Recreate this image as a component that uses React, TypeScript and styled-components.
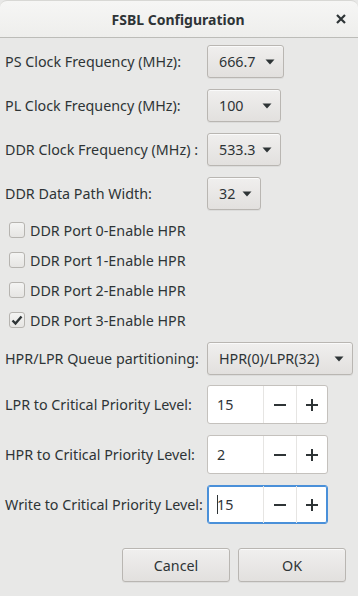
import React from "react";
import styled, { createGlobalStyle } from "styled-components";

const Global = createGlobalStyle`
  html, body { margin: 0; padding: 0; background: #e8e8e7; }
  body { font-family: "Noto Sans", "Open Sans", sans-serif; color: #2e3436; }
  * { box-sizing: border-box; }
`;

const Window = styled.div`
  width: 358px;
  height: 596px;
  background: #e8e8e7;
  display: flex;
  flex-direction: column;
  overflow: hidden;
`;

const TitleBar = styled.div`
  height: 38px;
  flex: none;
  display: flex;
  align-items: center;
  justify-content: center;
  position: relative;
  background: linear-gradient(#f6f6f5, #eeeeec);
  border-bottom: 1px solid #bcbcb8;
  border-radius: 7px 7px 0 0;
  border-top: 1px solid #d8d8d5;
`;

const Title = styled.div`
  font-size: 14px;
  font-weight: bold;
  color: #2e3436;
  margin-left: -2px;
`;

const Close = styled.div`
  position: absolute;
  right: 10px;
  top: 11px;
  width: 14px;
  height: 14px;
  display: flex;
  align-items: center;
  justify-content: center;
`;

const Body = styled.div`
  display: flex;
  flex-direction: column;
  padding: 7px 0 0 0;
`;

const Row = styled.div<{ $h: number; $mb: number; $mt?: number }>`
  display: grid;
  grid-template-columns: 207px auto;
  align-items: center;
  height: ${(p) => p.$h}px;
  margin-top: ${(p) => p.$mt ?? 0}px;
  margin-bottom: ${(p) => p.$mb}px;
`;

const Label = styled.div`
  padding-left: 5px;
  font-size: 14.3px;
  white-space: nowrap;
`;

const Combo = styled.div<{ $w: number }>`
  width: ${(p) => p.$w}px;
  height: 33px;
  border: 1px solid #b9b6b2;
  border-radius: 3px;
  background: linear-gradient(#f0efee, #e2e0de);
  box-shadow: inset 0 1px #fafafa, 0 1px rgba(0, 0, 0, 0.05);
  display: flex;
  align-items: center;
  padding-left: 11px;
  padding-right: 8px;
  font-size: 14.3px;
  gap: 6px;
`;

const ComboText = styled.span`
  flex: 1;
  white-space: nowrap;
`;

const Arrow = () => (
  <svg width="10" height="6" viewBox="0 0 10 6">
    <path d="M0.5 0.5 L9.5 0.5 L5 5.5 Z" fill="#2e3436" />
  </svg>
);

const CheckRow = styled.label`
  display: flex;
  align-items: center;
  height: 30px;
  padding-left: 9px;
  gap: 5px;
  font-size: 14.3px;
`;

const Box = styled.span`
  width: 16px;
  height: 16px;
  border: 1px solid #b6b4b0;
  border-radius: 3px;
  background: linear-gradient(#f4f4f3, #e6e5e3);
  display: flex;
  align-items: center;
  justify-content: center;
`;

const Spin = styled.div<{ $focus?: boolean }>`
  width: 121px;
  height: 39px;
  border: 1px solid ${(p) => (p.$focus ? "#4a90d9" : "#c4c1bd")};
  box-shadow: ${(p) => (p.$focus ? "inset 0 0 0 1px #4a90d9" : "none")};
  border-radius: 3px;
  background: #ffffff;
  display: grid;
  grid-template-columns: 55px 33px 1fr;
`;

const SpinEntry = styled.div`
  display: flex;
  align-items: center;
  padding-left: 9px;
  font-size: 14.3px;
  position: relative;
`;

const Caret = styled.span`
  position: absolute;
  left: 9px;
  top: 9px;
  width: 1px;
  height: 19px;
  background: #2e3436;
`;

const SpinBtn = styled.div`
  border-left: 1px solid #e6e5e3;
  display: flex;
  align-items: center;
  justify-content: center;
`;

const Footer = styled.div`
  display: flex;
  justify-content: flex-end;
  gap: 8px;
  padding: 13px 12px 0 0;
`;

const Button = styled.div`
  width: 108px;
  height: 34px;
  border: 1px solid #b9b6b2;
  border-radius: 3px;
  background: linear-gradient(#f0efee, #e2e0de);
  box-shadow: inset 0 1px #fafafa, 0 1px rgba(0, 0, 0, 0.05);
  display: flex;
  align-items: center;
  justify-content: center;
  font-size: 14.3px;
`;

const Minus = () => (
  <svg width="12" height="12" viewBox="0 0 12 12">
    <rect x="0" y="5" width="12" height="2" fill="#2e3436" />
  </svg>
);
const Plus = () => (
  <svg width="12" height="12" viewBox="0 0 12 12">
    <rect x="0" y="5" width="12" height="2" fill="#2e3436" />
    <rect x="5" y="0" width="2" height="12" fill="#2e3436" />
  </svg>
);

const Check = () => (
  <svg width="12" height="12" viewBox="0 0 12 12">
    <path d="M1.5 6.5 L4.5 9.5 L10.5 2.5" stroke="#2e3436" strokeWidth="2.4" fill="none" />
  </svg>
);

const combos = [
  { label: "PS Clock Frequency (MHz):", value: "666.7", w: 77 },
  { label: "PL Clock Frequency (MHz):", value: "100", w: 74 },
  { label: "DDR Clock Frequency (MHz) :", value: "533.3", w: 74 },
  { label: "DDR Data Path Width:", value: "32", w: 54 },
];

const checks = [
  { label: "DDR Port 0-Enable HPR", on: false },
  { label: "DDR Port 1-Enable HPR", on: false },
  { label: "DDR Port 2-Enable HPR", on: false },
  { label: "DDR Port 3-Enable HPR", on: true },
];

const spins = [
  { label: "LPR to Critical Priority Level:", value: "15", focus: false },
  { label: "HPR to Critical Priority Level:", value: "2", focus: false },
  { label: "Write to Critical Priority Level:", value: "15", focus: true },
];

export default function App() {
  return (
    <Window>
      <Global />
      <TitleBar>
        <Title>FSBL Configuration</Title>
        <Close>
          <svg width="10" height="10" viewBox="0 0 10 10">
            <path d="M1 1 L9 9 M9 1 L1 9" stroke="#2e3436" strokeWidth="2.2" />
          </svg>
        </Close>
      </TitleBar>
      <Body>
        {combos.map((c, i) => (
          <Row key={c.label} $h={33} $mb={i === combos.length - 1 ? 5 : 11}>
            <Label>{c.label}</Label>
            <Combo $w={c.w}>
              <ComboText>{c.value}</ComboText>
              <Arrow />
            </Combo>
          </Row>
        ))}
        {checks.map((c) => (
          <CheckRow key={c.label}>
            <Box>{c.on ? <Check /> : null}</Box>
            {c.label}
          </CheckRow>
        ))}
        <Row $h={33} $mt={7} $mb={10}>
          <Label>HPR/LPR Queue partitioning:</Label>
          <Combo $w={146}>
            <ComboText>HPR(0)/LPR(32)</ComboText>
            <Arrow />
          </Combo>
        </Row>
        {spins.map((s) => (
          <Row key={s.label} $h={39} $mb={11}>
            <Label>{s.label}</Label>
            <Spin $focus={s.focus}>
              <SpinEntry>
                {s.focus ? <Caret /> : null}
                {s.value}
              </SpinEntry>
              <SpinBtn>
                <Minus />
              </SpinBtn>
              <SpinBtn>
                <Plus />
              </SpinBtn>
            </Spin>
          </Row>
        ))}
      </Body>
      <Footer>
        <Button>Cancel</Button>
        <Button>OK</Button>
      </Footer>
    </Window>
  );
}
